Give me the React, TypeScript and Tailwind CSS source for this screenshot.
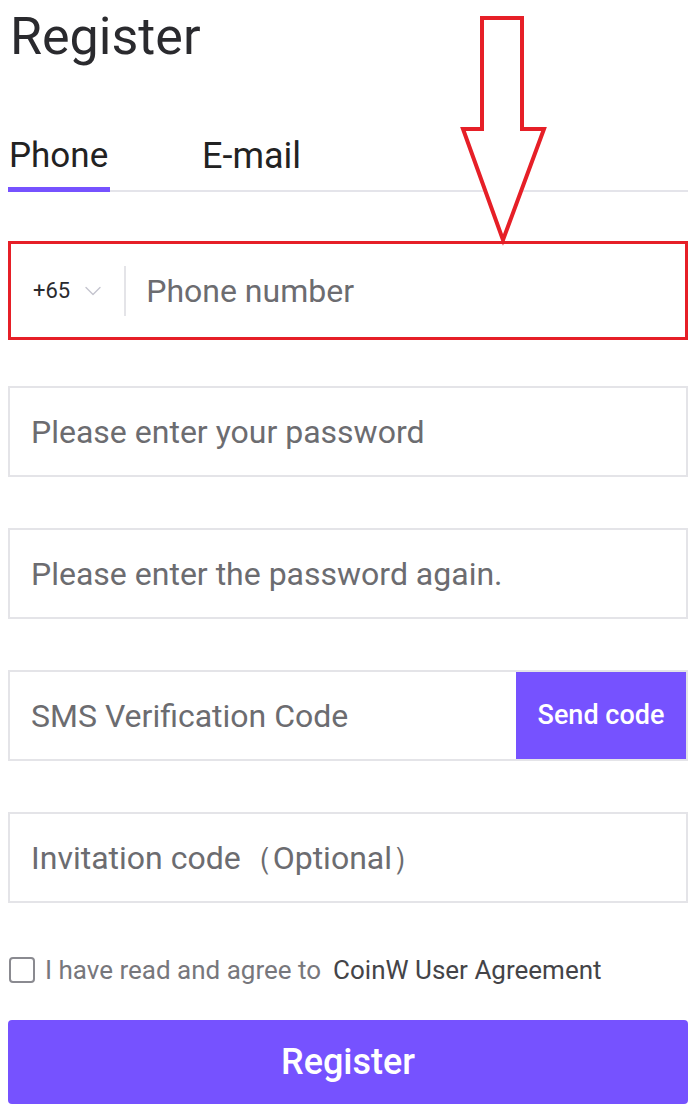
import { ChevronDown } from 'lucide-react';

const fields = [
  'Please enter your password',
  'Please enter the password again.',
];

function Field({ placeholder, children }: { placeholder: string; children?: React.ReactNode }) {
  return (
    <div className="flex h-[91px] items-stretch border-2 border-[#e4e4e8] bg-white">
      <input
        className="min-w-0 flex-1 bg-transparent pl-[21px] text-[32px] text-[#333] outline-none placeholder:text-[#6c6c70]"
        placeholder={placeholder}
      />
      {children}
    </div>
  );
}

export default function App() {
  return (
    <div
      className="relative w-[699px] bg-white pb-[15px] pl-2 pr-[11px] pt-[5px]"
      style={{ fontFamily: 'Roboto, "Noto Sans", sans-serif' }}
    >
      <h1 className="pl-[2px] text-[52px] leading-[64px] text-[#2a2a2e]">Register</h1>

      {/* Tabs */}
      <div className="mt-[67px] flex border-b-2 border-[#e4e4ea]">
        <div className="-mb-[2px] w-[102px] border-b-[5px] border-[#7652ff] pb-[11px] pl-px text-[35px] leading-[40px] text-[#222]">
          Phone
        </div>
        <div className="ml-[92px] pb-[13px] text-[36px] leading-[40px] text-[#222]">E-mail</div>
      </div>

      {/* Phone input (annotated) */}
      <div className="mt-[49px] flex h-[99px] items-center border-[3px] border-[#e61f27] bg-white">
        <div className="flex items-center pl-[22px]">
          <span className="text-[22px] text-[#2a2a2e]">+65</span>
          <ChevronDown className="ml-[9px] h-[28px] w-[28px] text-[#c4c4ce]" strokeWidth={1.2} />
        </div>
        <div className="ml-[17px] h-[50px] w-[2px] bg-[#e4e4e8]" />
        <input
          className="ml-[20px] min-w-0 flex-1 bg-transparent text-[32px] outline-none placeholder:text-[#6c6c70]"
          placeholder="Phone number"
        />
      </div>

      <div className="mt-[46px] flex flex-col gap-[51px]">
        {fields.map((f) => (
          <Field key={f} placeholder={f} />
        ))}
        <Field placeholder="SMS Verification Code">
          <button className="w-[170px] bg-[#7652ff] text-[27px] font-medium text-white">Send code</button>
        </Field>
        <Field placeholder="Invitation code（Optional）" />
      </div>

      {/* Agreement */}
      <div className="mt-[54px] flex items-center">
        <div className="ml-px h-[26px] w-[26px] rounded-[4px] border-2 border-[#8a8a90]" />
        <span className="ml-[10px] text-[26px] leading-[26px] text-[#77777c]">I have read and agree to</span>
        <span className="ml-[12px] text-[26px] leading-[26px] text-[#444448]">CoinW User Agreement</span>
      </div>

      <button className="mt-[37px] h-[84px] w-full rounded-[4px] bg-[#7652ff] text-[36px] font-medium text-white">
        Register
      </button>

      {/* Annotation arrow */}
      <svg
        className="pointer-events-none absolute left-0 top-0"
        width="699"
        height="250"
        viewBox="0 0 699 250"
      >
        <polygon
          points="482,18 522,18 522,129 544,129 503,240 463,129 482,129"
          fill="white"
          stroke="#e61f27"
          strokeWidth="4"
          strokeLinejoin="miter"
        />
      </svg>
    </div>
  );
}
